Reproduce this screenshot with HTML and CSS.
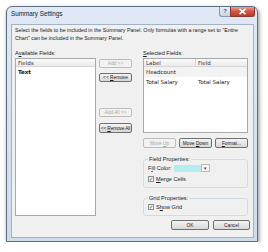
FILE: index.html
```html
<!DOCTYPE html>
<html lang="en">
<head>
  <meta charset="UTF-8" />
  <title>Summary Settings</title>
  <link rel="stylesheet" href="styles.css">
</head>
<body>
  <div class="window">
    <div class="titlebar">
      <span class="title">Summary Settings</span>
      <div class="caption-btns">
        <span class="btn-help">?</span>
        <span class="btn-close">
          <svg width="9" height="7" viewBox="0 0 9 7"><path d="M1.5 0.8 L7.5 6.2 M7.5 0.8 L1.5 6.2" stroke="#fff" stroke-width="1.6"/></svg>
        </span>
      </div>
    </div>

    <div class="client">
      <p class="desc">Select the fields to be included in the Summary Panel. Only formulas with a range set to "Entire Chart" can be included in the Summary Panel.</p>

      <div class="panels">
        <div class="col-left">
          <div class="lbl">A<u>v</u>ailable Fields:</div>
          <div class="listbox tall">
            <div class="list-head"><span class="col">Fields</span></div>
            <div class="row bold"><span class="col">Text</span></div>
          </div>
        </div>

        <div class="col-mid">
          <button class="btn disabled b-add">Add &gt;&gt;</button>
          <button class="btn b-remove">&lt;&lt; <u>R</u>emove</button>
          <button class="btn disabled b-addall">Add All &gt;&gt;</button>
          <button class="btn b-removeall">&lt;&lt; <u>R</u>emove All</button>
        </div>

        <div class="col-right">
          <div class="lbl"><u>S</u>elected Fields:</div>
          <div class="listbox grid">
            <div class="list-head"><span class="c1">Label</span><span class="c2">Field</span></div>
            <div class="row grey"><span class="c1">Headcount</span><span class="c2"></span></div>
            <div class="row"><span class="c1">Total Salary</span><span class="c2">Total Salary</span></div>
          </div>

          <div class="btn-row">
            <button class="btn disabled">Move <u>U</u>p</button>
            <button class="btn">Move <u>D</u>own</button>
            <button class="btn"><u>F</u>ormat...</button>
          </div>

          <fieldset class="group g-field">
            <legend>Field Properties:</legend>
            <div class="fill-row">
              <span class="fill-lbl">F<u>i</u>ll Color:</span>
              <span class="swatch"></span>
              <span class="drop">&#9662;</span>
            </div>
            <div class="check-row"><span class="check">&#10003;</span><span><u>M</u>erge Cells</span></div>
          </fieldset>

          <fieldset class="group g-grid">
            <legend>Grid Properties:</legend>
            <div class="check-row"><span class="check">&#10003;</span><span>S<u>h</u>ow Grid</span></div>
          </fieldset>
        </div>
      </div>

      <div class="footer-btns">
        <button class="btn ok">OK</button>
        <button class="btn cancel">Cancel</button>
      </div>
    </div>
  </div>
</body>
</html>
```

FILE: styles.css
```css
* { margin: 0; padding: 0; box-sizing: border-box; }

body {
  background: #fff;
  padding: 6px 0 0 6px;
  font-family: 'Liberation Sans', Arial, sans-serif;
  font-size: 5.6px;
  color: #1a1a1a;
}

.window {
  width: 252px;
  height: 236px;
  border: 1px solid #5f6e80;
  border-radius: 6px 6px 0 0;
  background: linear-gradient(#dfe8f4, #cfdcec);
  box-shadow: 1px 2px 4px rgba(0,0,0,0.45);
  display: flex;
  flex-direction: column;
}

.titlebar {
  height: 17px;
  display: flex;
  align-items: flex-start;
  justify-content: space-between;
  padding-left: 4px;
}

.title {
  font-size: 6.3px;
  line-height: 14px;
  color: #202020;
}

.caption-btns {
  display: flex;
  margin-right: 2px;
}

.btn-help {
  width: 11px;
  height: 10px;
  border: 1px solid #8a98aa;
  border-top: none;
  border-right: none;
  border-radius: 0 0 0 3px;
  background: linear-gradient(#e9eef5, #c9d4e2);
  color: #4a5a70;
  font-size: 6px;
  font-weight: bold;
  text-align: center;
  line-height: 9px;
}

.btn-close {
  width: 25px;
  height: 10px;
  border: 1px solid #8a3a32;
  border-top: none;
  border-radius: 0 0 3px 0;
  background: linear-gradient(#e8a493, #d5594a 45%, #c2382a);
  display: flex;
  align-items: center;
  justify-content: center;
}

.client {
  flex: 1;
  margin: 0 3px 3px 4px;
  background: #f0f0f0;
  border: 1px solid #a3b3c6;
  padding: 1px 3px 0 3px;
  display: flex;
  flex-direction: column;
}

.desc {
  font-size: 5.3px;
  line-height: 8px;
}

.panels {
  display: flex;
  margin-top: 7px;
}

.lbl {
  height: 9px;
  line-height: 8px;
}

.col-left { width: 81px; }
.col-right { width: 105px; margin-left: 11px; }

.col-mid {
  width: 33px;
  margin-left: 3px;
  display: flex;
  flex-direction: column;
  padding-top: 10px;
}

.listbox {
  background: #fff;
  border: 1px solid #a9a9a9;
  font-family: 'DejaVu Sans', sans-serif;
  font-size: 5.5px;
}

.listbox.tall { height: 158px; }
.listbox.grid { height: 75px; }

.list-head {
  height: 8px;
  display: flex;
  background: linear-gradient(#fbfbfb, #ebebeb);
  border-bottom: 1px solid #d6d6d6;
  line-height: 8px;
  color: #333;
}

.list-head .col { flex: 1; padding-left: 2px; }

.row {
  display: flex;
  height: 10px;
  line-height: 10px;
}

.row .col { padding-left: 2px; }

.row.bold { font-weight: bold; color: #111; }
.row.grey { background: #f3f3f3; }

.c1 {
  width: 52px;
  padding-left: 2px;
}

.list-head .c1 { border-right: 1px solid #d6d6d6; }

.c2 {
  flex: 1;
  padding-left: 2px;
}

.btn {
  height: 9px;
  border: 1px solid #707070;
  border-radius: 2px;
  background: linear-gradient(#f4f4f4, #e6e6e6 50%, #d6d6d6);
  font-family: 'Liberation Sans', Arial, sans-serif;
  font-size: 4.8px;
  color: #1a1a1a;
  line-height: 7px;
  white-space: nowrap;
  overflow: hidden;
}

.btn.disabled {
  border-color: #bcbcbc;
  background: #f2f2f2;
  color: #a6a6a6;
}

.b-remove { margin-top: 5px; }
.b-addall { margin-top: 26px; }
.b-removeall { margin-top: 6px; height: 10px; letter-spacing: -0.15px; }

.btn-row {
  display: flex;
  gap: 3px;
  margin-top: 5px;
}

.btn-row .btn { flex: 1; height: 10px; }

.group {
  border: 1px solid #d3dbe2;
  border-radius: 3px;
  padding: 0 4px;
}

.group legend {
  padding: 0 1px;
  margin-left: 0;
  line-height: 6px;
}

.g-field { margin-top: 8px; height: 32px; }
.g-grid { margin-top: 7px; height: 21px; }

.fill-row {
  display: flex;
  align-items: center;
  margin-top: 2px;
  height: 8px;
}

.fill-lbl { width: 26px; }

.swatch {
  width: 27px;
  height: 7px;
  background: #b5ecef;
}

.drop {
  width: 9px;
  height: 8px;
  border: 1px solid #bcbcbc;
  background: #f6f6f6;
  font-size: 5px;
  text-align: center;
  line-height: 6px;
  color: #444;
}

.check-row {
  display: flex;
  align-items: center;
  gap: 2px;
  margin-top: 4px;
}

.g-grid .check-row { margin-top: 3px; }

.check {
  width: 6px;
  height: 6px;
  border: 1px solid #8e8f8f;
  background: linear-gradient(#e6e6e6, #fff);
  font-size: 5px;
  line-height: 5px;
  text-align: center;
  color: #333;
}

.footer-btns {
  display: flex;
  justify-content: flex-end;
  gap: 4px;
  margin-top: 4px;
}

.footer-btns .btn { height: 10px; }
.ok { width: 38px; }
.cancel { width: 37px; }
```
